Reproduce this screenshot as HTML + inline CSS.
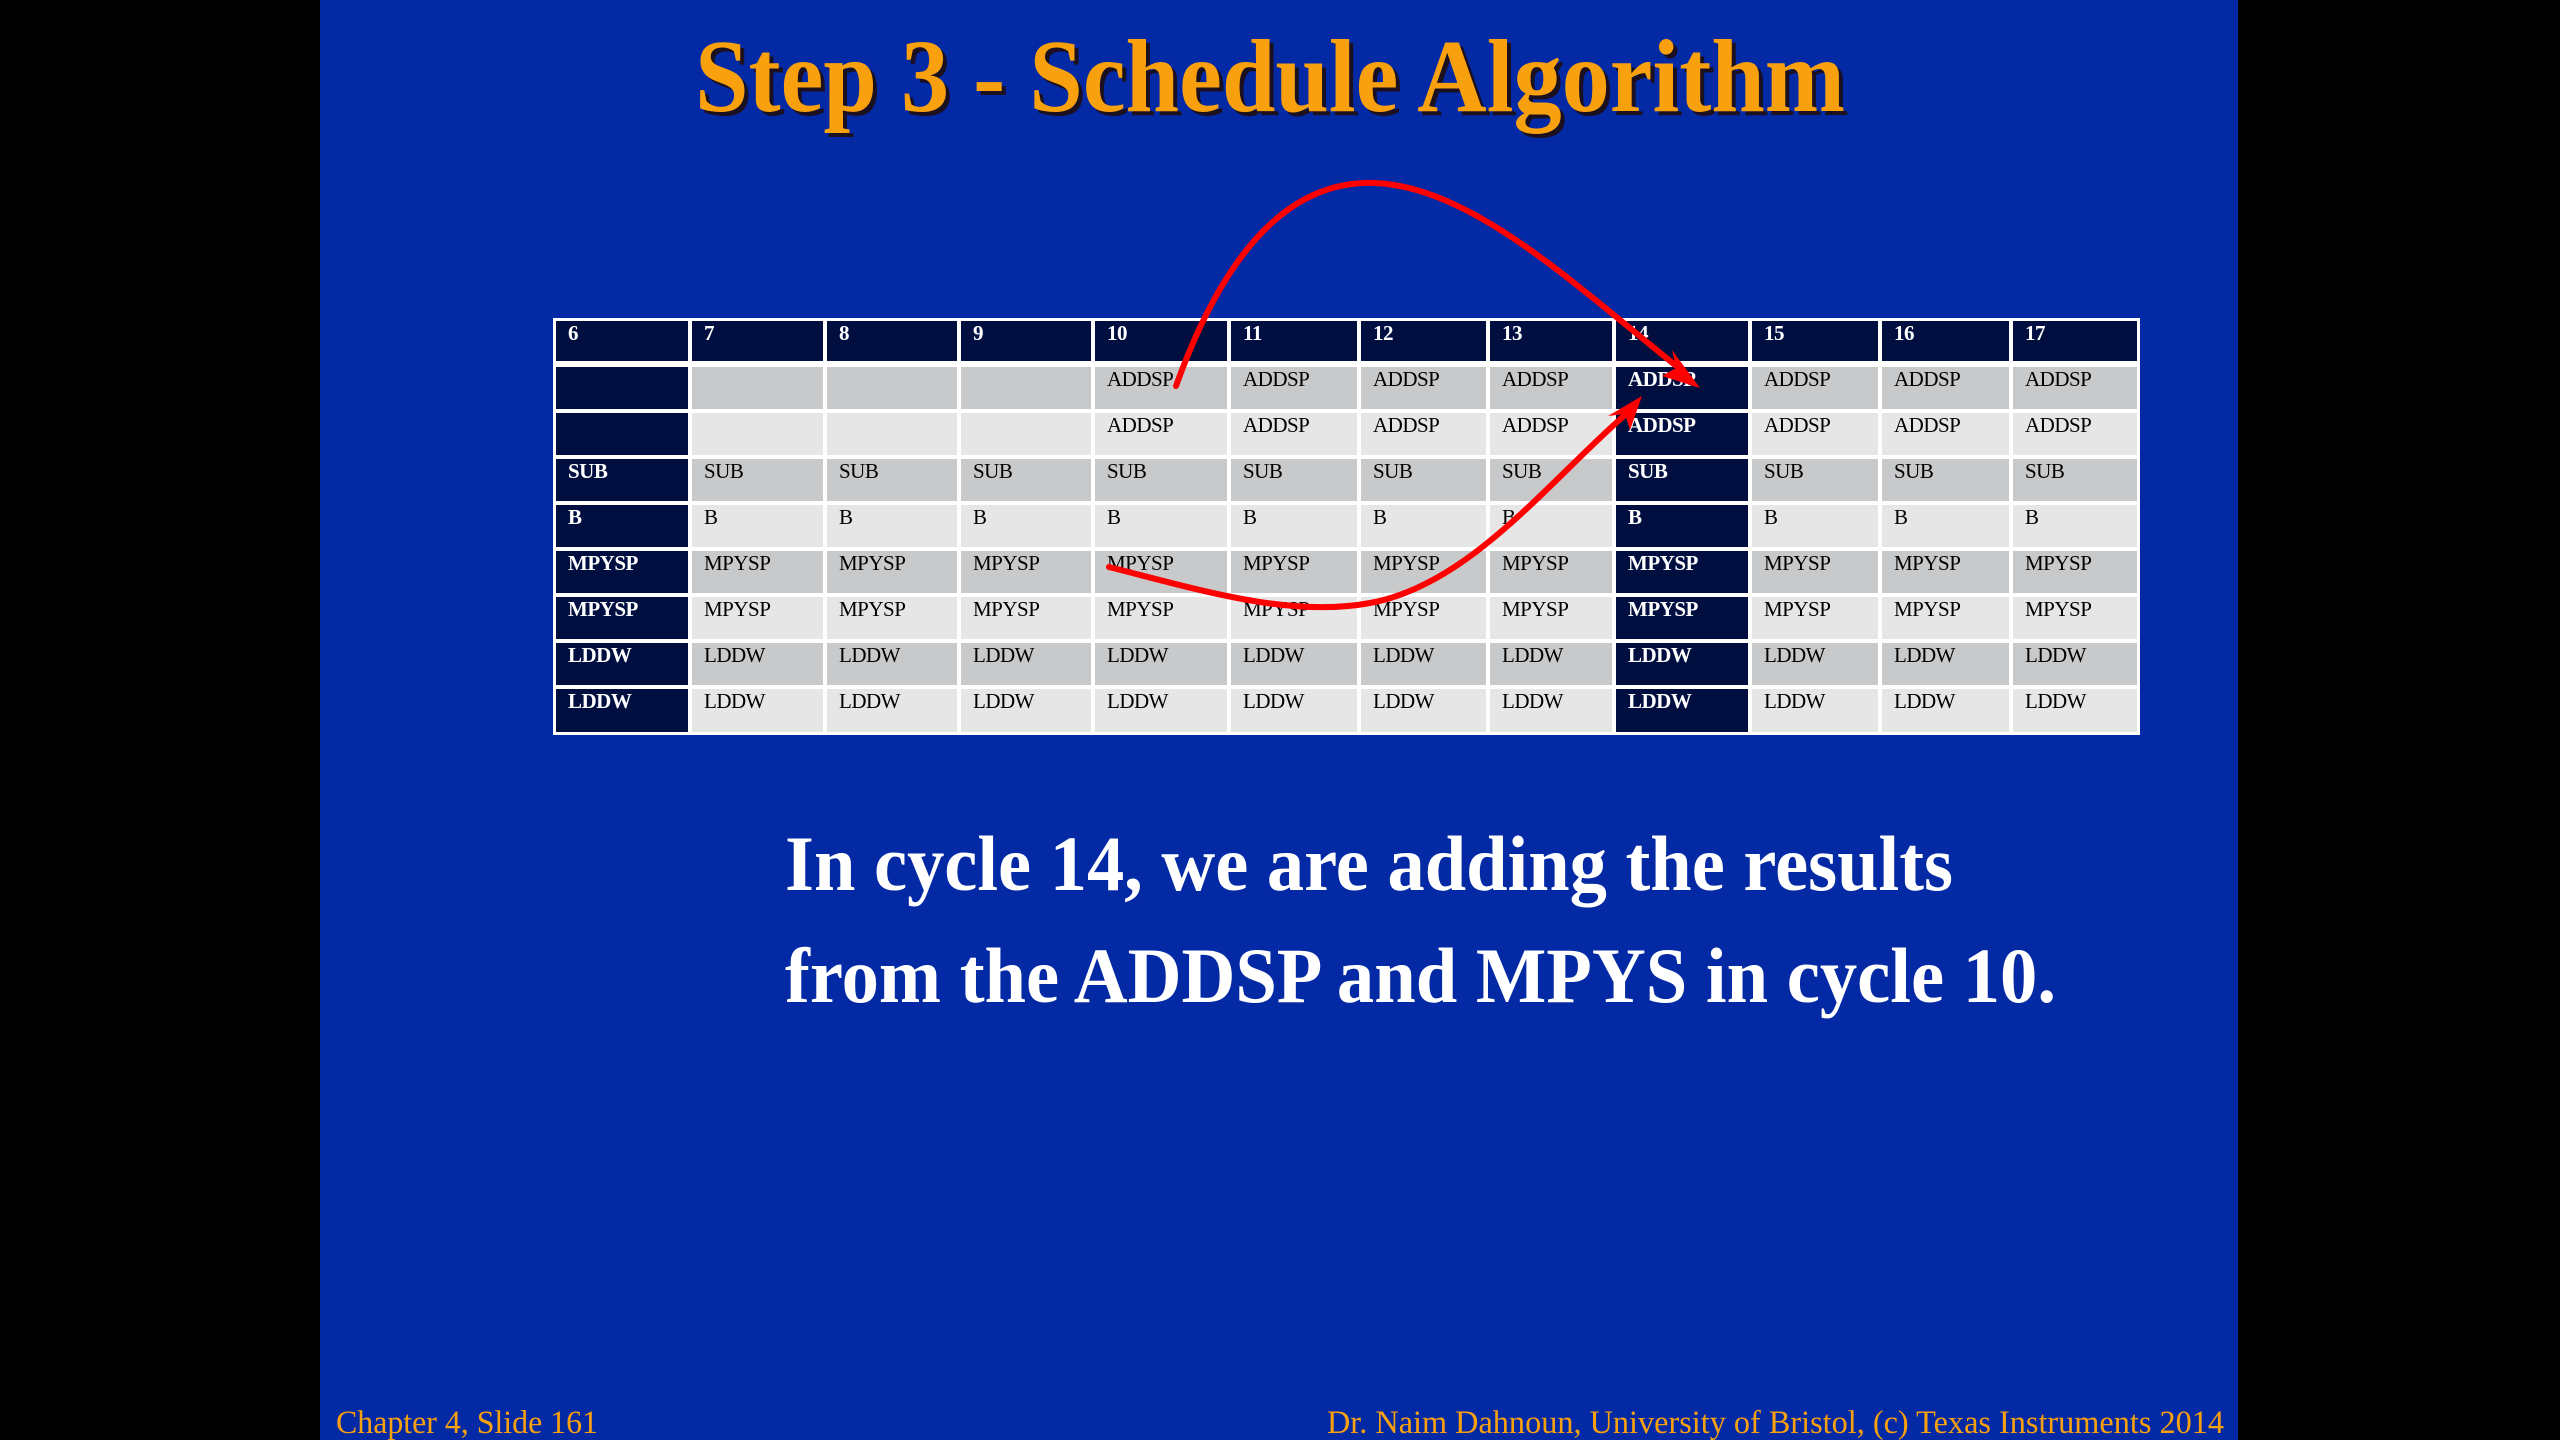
<!DOCTYPE html>
<html><head><meta charset="utf-8"><style>
html,body{margin:0;padding:0;background:#000;}
svg{display:block}
.c{font-family:"Liberation Serif",serif;font-size:21px;fill:#000;letter-spacing:-0.5px}
.w{font-family:"Liberation Serif",serif;font-size:21px;fill:#fff;font-weight:bold;letter-spacing:-0.5px}
</style></head><body>
<svg width="2560" height="1440" viewBox="0 0 2560 1440" xmlns="http://www.w3.org/2000/svg">
<rect x="0" y="0" width="2560" height="1440" fill="#000"/>
<rect x="320" y="0" width="1918" height="1440" fill="#0329a5"/>
<text x="699" y="115" textLength="1150" lengthAdjust="spacingAndGlyphs" font-family="Liberation Serif, serif" font-weight="bold" font-size="104" fill="#1a1020">Step 3 - Schedule Algorithm</text>
<text x="695" y="111" textLength="1150" lengthAdjust="spacingAndGlyphs" font-family="Liberation Serif, serif" font-weight="bold" font-size="104" fill="#f9a00e">Step 3 - Schedule Algorithm</text>
<rect x="553" y="318" width="1587" height="417" fill="#fff"/>
<rect x="556" y="321" width="1581" height="40" fill="#000f40"/>
<rect x="556" y="367" width="1581" height="42" fill="#c8c9cb"/>
<rect x="556" y="413" width="1581" height="42" fill="#e6e6e6"/>
<rect x="556" y="459" width="1581" height="42" fill="#c8c9cb"/>
<rect x="556" y="505" width="1581" height="42" fill="#e6e6e6"/>
<rect x="556" y="551" width="1581" height="42" fill="#c8c9cb"/>
<rect x="556" y="597" width="1581" height="42" fill="#e6e6e6"/>
<rect x="556" y="643" width="1581" height="42" fill="#c8c9cb"/>
<rect x="556" y="689" width="1581" height="43" fill="#e6e6e6"/>
<rect x="556" y="367" width="132" height="365" fill="#000f40"/>
<rect x="1616" y="367" width="132" height="365" fill="#000f40"/>
<g fill="#fff">
<rect x="688" y="318" width="4" height="417"/>
<rect x="823" y="318" width="4" height="417"/>
<rect x="957" y="318" width="4" height="417"/>
<rect x="1091" y="318" width="4" height="417"/>
<rect x="1227" y="318" width="4" height="417"/>
<rect x="1357" y="318" width="4" height="417"/>
<rect x="1486" y="318" width="4" height="417"/>
<rect x="1612" y="318" width="4" height="417"/>
<rect x="1748" y="318" width="4" height="417"/>
<rect x="1878" y="318" width="4" height="417"/>
<rect x="2009" y="318" width="4" height="417"/>
<rect x="553" y="361" width="1587" height="6"/>
<rect x="553" y="409" width="1587" height="4"/>
<rect x="553" y="455" width="1587" height="4"/>
<rect x="553" y="501" width="1587" height="4"/>
<rect x="553" y="547" width="1587" height="4"/>
<rect x="553" y="593" width="1587" height="4"/>
<rect x="553" y="639" width="1587" height="4"/>
<rect x="553" y="685" width="1587" height="4"/>
</g>
<text class="w" y="340"><tspan x="568">6</tspan><tspan x="704">7</tspan><tspan x="839">8</tspan><tspan x="973">9</tspan><tspan x="1107">10</tspan><tspan x="1243">11</tspan><tspan x="1373">12</tspan><tspan x="1502">13</tspan><tspan x="1628">14</tspan><tspan x="1764">15</tspan><tspan x="1894">16</tspan><tspan x="2025">17</tspan></text>
<text class="c" y="386"><tspan x="1107">ADDSP</tspan><tspan x="1243">ADDSP</tspan><tspan x="1373">ADDSP</tspan><tspan x="1502">ADDSP</tspan><tspan x="1764">ADDSP</tspan><tspan x="1894">ADDSP</tspan><tspan x="2025">ADDSP</tspan></text>
<text class="w" y="386" x="1628">ADDSP</text>
<text class="c" y="432"><tspan x="1107">ADDSP</tspan><tspan x="1243">ADDSP</tspan><tspan x="1373">ADDSP</tspan><tspan x="1502">ADDSP</tspan><tspan x="1764">ADDSP</tspan><tspan x="1894">ADDSP</tspan><tspan x="2025">ADDSP</tspan></text>
<text class="w" y="432" x="1628">ADDSP</text>
<text class="c" y="478"><tspan x="704">SUB</tspan><tspan x="839">SUB</tspan><tspan x="973">SUB</tspan><tspan x="1107">SUB</tspan><tspan x="1243">SUB</tspan><tspan x="1373">SUB</tspan><tspan x="1502">SUB</tspan><tspan x="1764">SUB</tspan><tspan x="1894">SUB</tspan><tspan x="2025">SUB</tspan></text>
<text class="w" y="478"><tspan x="568">SUB</tspan><tspan x="1628">SUB</tspan></text>
<text class="c" y="524"><tspan x="704">B</tspan><tspan x="839">B</tspan><tspan x="973">B</tspan><tspan x="1107">B</tspan><tspan x="1243">B</tspan><tspan x="1373">B</tspan><tspan x="1502">B</tspan><tspan x="1764">B</tspan><tspan x="1894">B</tspan><tspan x="2025">B</tspan></text>
<text class="w" y="524"><tspan x="568">B</tspan><tspan x="1628">B</tspan></text>
<text class="c" y="570"><tspan x="704">MPYSP</tspan><tspan x="839">MPYSP</tspan><tspan x="973">MPYSP</tspan><tspan x="1107">MPYSP</tspan><tspan x="1243">MPYSP</tspan><tspan x="1373">MPYSP</tspan><tspan x="1502">MPYSP</tspan><tspan x="1764">MPYSP</tspan><tspan x="1894">MPYSP</tspan><tspan x="2025">MPYSP</tspan></text>
<text class="w" y="570"><tspan x="568">MPYSP</tspan><tspan x="1628">MPYSP</tspan></text>
<text class="c" y="616"><tspan x="704">MPYSP</tspan><tspan x="839">MPYSP</tspan><tspan x="973">MPYSP</tspan><tspan x="1107">MPYSP</tspan><tspan x="1243">MPYSP</tspan><tspan x="1373">MPYSP</tspan><tspan x="1502">MPYSP</tspan><tspan x="1764">MPYSP</tspan><tspan x="1894">MPYSP</tspan><tspan x="2025">MPYSP</tspan></text>
<text class="w" y="616"><tspan x="568">MPYSP</tspan><tspan x="1628">MPYSP</tspan></text>
<text class="c" y="662"><tspan x="704">LDDW</tspan><tspan x="839">LDDW</tspan><tspan x="973">LDDW</tspan><tspan x="1107">LDDW</tspan><tspan x="1243">LDDW</tspan><tspan x="1373">LDDW</tspan><tspan x="1502">LDDW</tspan><tspan x="1764">LDDW</tspan><tspan x="1894">LDDW</tspan><tspan x="2025">LDDW</tspan></text>
<text class="w" y="662"><tspan x="568">LDDW</tspan><tspan x="1628">LDDW</tspan></text>
<text class="c" y="708"><tspan x="704">LDDW</tspan><tspan x="839">LDDW</tspan><tspan x="973">LDDW</tspan><tspan x="1107">LDDW</tspan><tspan x="1243">LDDW</tspan><tspan x="1373">LDDW</tspan><tspan x="1502">LDDW</tspan><tspan x="1764">LDDW</tspan><tspan x="1894">LDDW</tspan><tspan x="2025">LDDW</tspan></text>
<text class="w" y="708"><tspan x="568">LDDW</tspan><tspan x="1628">LDDW</tspan></text>
<g fill="none" stroke="#ff0000" stroke-width="6" stroke-linecap="round">
<path d="M1176,386 C1225,250 1290,180 1375,183 C1470,187 1570,280 1675,365"/>
<path d="M1109,567 C1200,590 1290,618 1370,603 C1470,585 1550,480 1625,415"/>
</g>
<g fill="#ff0000">
<polygon points="1700,388 1662,376 1676,368 1672,350"/>
<polygon points="1642,396 1630,430 1625,414 1608,416"/>
</g>
<text x="785" y="890" textLength="1168" lengthAdjust="spacingAndGlyphs" font-family="Liberation Serif, serif" font-weight="bold" font-size="78" fill="#fff">In cycle 14, we are adding the results</text>
<text x="785" y="1002" textLength="1271" lengthAdjust="spacingAndGlyphs" font-family="Liberation Serif, serif" font-weight="bold" font-size="78" fill="#fff">from the ADDSP and MPYS in cycle 10.</text>
<text x="336" y="1433" textLength="262" lengthAdjust="spacingAndGlyphs" font-family="Liberation Serif, serif" font-size="33" fill="#f9a00e">Chapter 4, Slide 161</text>
<text x="1327" y="1433" textLength="897" lengthAdjust="spacingAndGlyphs" font-family="Liberation Serif, serif" font-size="33" fill="#f9a00e">Dr. Naim Dahnoun, University of Bristol,  (c) Texas Instruments 2014</text>
</svg>
</body></html>
